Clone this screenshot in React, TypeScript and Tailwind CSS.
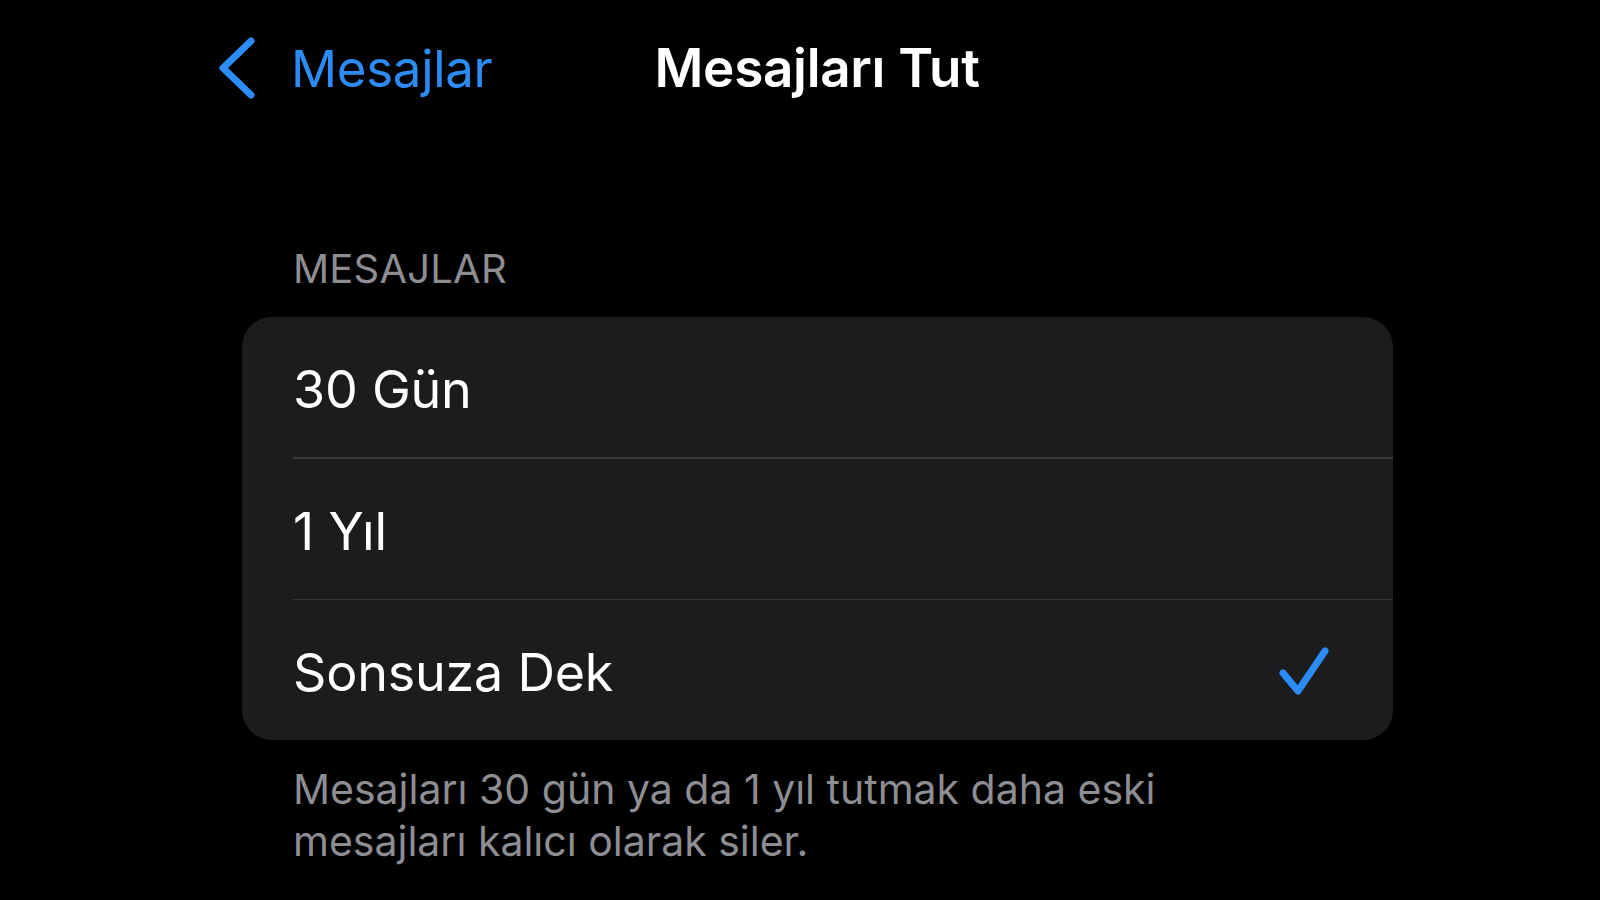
import React from "react";

const rows = [
  { label: "30 Gün", checked: false },
  { label: "1 Yıl", checked: false },
  { label: "Sonsuza Dek", checked: true },
];

function Chevron() {
  return (
    <svg width="40" height="64" viewBox="0 0 40 64" fill="none">
      <path
        d="M34 5 L6 32 L34 59"
        stroke="#2c8cf6"
        strokeWidth="7"
        strokeLinecap="round"
        strokeLinejoin="round"
      />
    </svg>
  );
}

function Check() {
  return (
    <svg width="56" height="56" viewBox="0 0 56 56" fill="none">
      <path
        d="M7 31 L22 49 L49 9"
        stroke="#2c8cf6"
        strokeWidth="7"
        strokeLinecap="round"
        strokeLinejoin="round"
      />
    </svg>
  );
}

export default function App() {
  return (
    <div
      className="w-[1600px] h-[900px] bg-black overflow-hidden"
      style={{ fontFamily: "Inter, 'Noto Sans', sans-serif" }}
    >
      {/* nav bar */}
      <div className="h-[136px] flex items-center pl-[217px]">
        <div className="flex items-center gap-[34px] text-[#2c8cf6]">
          <Chevron />
          <span className="text-[51px] leading-none tracking-[-0.3px]">Mesajlar</span>
        </div>
        <div className="ml-[162px] text-white text-[53px] font-semibold leading-none tracking-[-0.3px]">
          Mesajları Tut
        </div>
      </div>

      <div className="pl-[242px] w-[1393px]">
        <div className="pl-[51px] mt-[113px] text-[40px] leading-none text-[#8d8d92] tracking-[0.2px]">
          MESAJLAR
        </div>

        <div className="mt-[28px] bg-[#1c1c1e] rounded-[30px] overflow-hidden">
          {rows.map((r, i) => (
            <div key={r.label} className="pl-[51px]">
              <div className="h-[140px] flex items-center justify-between pr-[61px]">
                <span className="pt-[6px] text-white text-[52px] leading-none tracking-[-0.2px]">{r.label}</span>
                {r.checked ? <Check /> : null}
              </div>
              {i < rows.length - 1 ? <div className="h-[1.5px] bg-[#3a3a3d]" /> : null}
            </div>
          ))}
        </div>

        <p className="pl-[51px] mt-[23px] text-[41px] leading-[52px] text-[#8d8d92]">
          Mesajları 30 gün ya da 1 yıl tutmak daha eski
          <br />
          mesajları kalıcı olarak siler.
        </p>
      </div>
    </div>
  );
}
